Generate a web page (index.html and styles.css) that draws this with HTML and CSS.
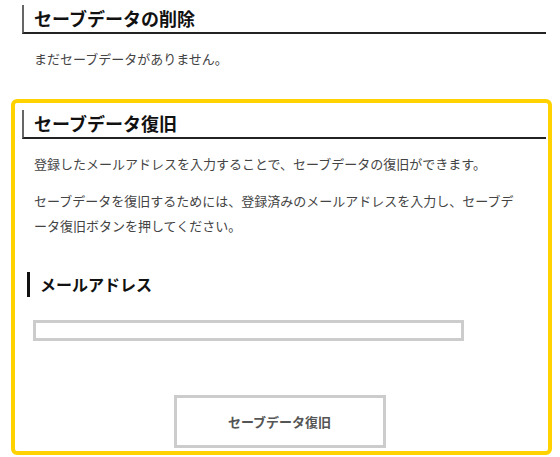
FILE: index.html
```html
<!DOCTYPE html>
<html lang="ja">
<head>
    <meta charset="UTF-8">
    <meta name="viewport" content="width=device-width, initial-scale=1.0">
    <title>セーブデータ</title>
    <link rel="stylesheet" href="styles.css">
</head>
<body>

<div class="section section-delete">
    <h2 class="section-title">セーブデータの削除</h2>
    <p>まだセーブデータがありません。</p>
</div>

<div class="section section-restore">
    <h2 class="section-title">セーブデータ復旧</h2>
    <p>登録したメールアドレスを入力することで、セーブデータの復旧ができます。</p>
    <p>セーブデータを復旧するためには、登録済みのメールアドレスを入力し、セーブデータ復旧ボタンを押してください。</p>

    <h3 class="field-title">メールアドレス</h3>
    <input type="text" class="mail-input" id="mailAddress">

    <div class="button-row">
        <button id="restoreSave">セーブデータ復旧</button>
    </div>
</div>

</body>
</html>
```

FILE: styles.css
```css
body {
    font-family: 'Noto Sans CJK JP', 'Noto Sans', sans-serif;
    margin: 0;
    padding: 0 8px 0 11px;
    background-color: #ffffff;
    color: #444444;
}
.section {
    border: 4px solid transparent;
    border-radius: 6px;
    padding: 7px 2px 3px 7px;
    margin-bottom: 5px;
}
.section-delete {
    margin-top: -6px;
    padding-bottom: 7px;
}
.section-restore {
    border-color: #ffd200;
}
.section-title {
    margin: 0;
    font-size: 18px;
    font-weight: bold;
    line-height: 27px;
    color: #111111;
    padding-left: 10px;
    border-left: 2px solid #666666;
    border-bottom: 2px solid #222222;
}
p {
    font-size: 13px;
    line-height: 25px;
    margin: 12px 24px 12px 12px;
}
.field-title {
    margin: 34px 0 0 5px;
    font-size: 16px;
    font-weight: bold;
    line-height: 25px;
    color: #111111;
    padding-left: 10px;
    border-left: 3px solid #111111;
}
.mail-input {
    display: block;
    box-sizing: border-box;
    width: 431px;
    height: 21px;
    margin: 23px 0 0 11px;
    border: 3px solid #cccccc;
    outline: none;
    padding: 0 6px;
}
.button-row {
    display: flex;
    justify-content: center;
    padding-right: 9px;
    margin-top: 54px;
}
.button-row button {
    box-sizing: border-box;
    width: 212px;
    height: 53px;
    background-color: #ffffff;
    border: 3px solid #cccccc;
    font-family: inherit;
    font-size: 13px;
    font-weight: bold;
    color: #555555;
    cursor: pointer;
}
```
